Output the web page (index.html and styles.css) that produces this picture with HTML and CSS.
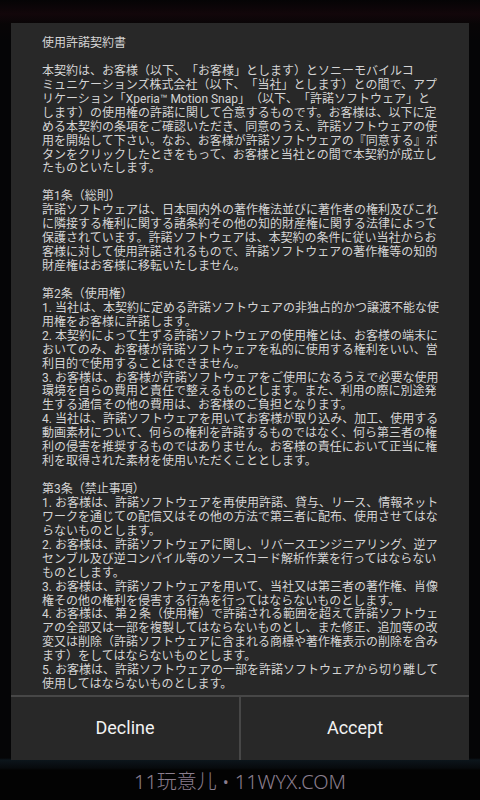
FILE: index.html
```html
<!DOCTYPE html>
<html lang="ja">
<head>
  <meta charset="UTF-8">
  <meta name="viewport" content="width=device-width, initial-scale=1">
  <link rel="stylesheet" href="styles.css">
  <title>使用許諾契約書</title>
</head>
<body>
  <div class="screen">
    <div class="dialog">
      <div class="terms">
        <p>使用許諾契約書</p>
        <p>本契約は、お客様（以下、「お客様」とします）とソニーモバイルコ<br>ミュニケーションズ株式会社（以下、「当社」とします）との間で、アプ<br>リケーション「Xperia™ Motion Snap」（以下、「許諾ソフトウェア」と<br>します）の使用権の許諾に関して合意するものです。お客様は、以下に定<br>める本契約の条項をご確認いただき、同意のうえ、許諾ソフトウェアの使<br>用を開始して下さい。なお、お客様が許諾ソフトウェアの『同意する』ボ<br>タンをクリックしたときをもって、お客様と当社との間で本契約が成立し<br>たものといたします。</p>
        <p>第1条（総則）<br>許諾ソフトウェアは、日本国内外の著作権法並びに著作者の権利及びこれ<br>に隣接する権利に関する諸条約その他の知的財産権に関する法律によって<br>保護されています。許諾ソフトウェアは、本契約の条件に従い当社からお<br>客様に対して使用許諾されるもので、許諾ソフトウェアの著作権等の知的<br>財産権はお客様に移転いたしません。</p>
        <p>第2条（使用権）<br>1. 当社は、本契約に定める許諾ソフトウェアの非独占的かつ譲渡不能な使<br>用権をお客様に許諾します。<br>2. 本契約によって生ずる許諾ソフトウェアの使用権とは、お客様の端末に<br>おいてのみ、お客様が許諾ソフトウェアを私的に使用する権利をいい、営<br>利目的で使用することはできません。<br>3. お客様は、お客様が許諾ソフトウェアをご使用になるうえで必要な使用<br>環境を自らの費用と責任で整えるものとします。また、利用の際に別途発<br>生する通信その他の費用は、お客様のご負担となります。<br>4. 当社は、許諾ソフトウェアを用いてお客様が取り込み、加工、使用する<br>動画素材について、何らの権利を許諾するものではなく、何ら第三者の権<br>利の侵害を推奨するものではありません。お客様の責任において正当に権<br>利を取得された素材を使用いただくこととします。</p>
        <p>第3条（禁止事項）<br>1. お客様は、許諾ソフトウェアを再使用許諾、貸与、リース、情報ネット<br>ワークを通じての配信又はその他の方法で第三者に配布、使用させてはな<br>らないものとします。<br>2. お客様は、許諾ソフトウェアに関し、リバースエンジニアリング、逆ア<br>センブル及び逆コンパイル等のソースコード解析作業を行ってはならない<br>ものとします。<br>3. お客様は、許諾ソフトウェアを用いて、当社又は第三者の著作権、肖像<br>権その他の権利を侵害する行為を行ってはならないものとします。<br>4. お客様は、第２条（使用権）で許諾される範囲を超えて許諾ソフトウェ<br>アの全部又は一部を複製してはならないものとし、また修正、追加等の改<br>変又は削除（許諾ソフトウェアに含まれる商標や著作権表示の削除を含み<br>ます）をしてはならないものとします。<br>5. お客様は、許諾ソフトウェアの一部を許諾ソフトウェアから切り離して<br>使用してはならないものとします。</p>
      </div>
      <div class="buttons">
        <div class="btn">Decline</div>
        <div class="btn">Accept</div>
      </div>
    </div>
    <div class="watermark">11玩意儿 • 11WYX.COM</div>
  </div>
</body>
</html>
```

FILE: styles.css
```css
body {
  margin: 0;
  background-color: #050506;
  font-family: Roboto, "Noto Sans CJK JP", sans-serif;
}

.screen {
  width: 480px;
  height: 800px;
  display: flex;
  flex-direction: column;
  background:
    linear-gradient(180deg, #050405 0px, #12060a 14px, #080506 24px, transparent 40px),
    linear-gradient(180deg, transparent 758px, #0c151b 760px, #070a0d 768px, #030303 770px),
    #050506;
  overflow: hidden;
}

.dialog {
  margin: 23px 11px 0;
  height: 737px;
  background-color: #282828;
  display: flex;
  flex-direction: column;
}

.terms {
  flex: 1;
  overflow: hidden;
  padding: 14px 31px 0;
  margin-bottom: 6px;
  color: #d4d4d4;
  font-size: 12px;
  line-height: 13.94px;
  text-spacing-trim: space-all;
}

.terms p {
  margin: 0 0 13.94px;
  white-space: nowrap;
}

.buttons {
  height: 63px;
  display: flex;
  border-top: 2px solid #474747;
}

.btn {
  flex: 1;
  display: flex;
  align-items: center;
  justify-content: center;
  color: #f2f2f2;
  font-size: 18px;
  padding-bottom: 2px;
}

.btn + .btn {
  border-left: 2px solid #474747;
}

.watermark {
  text-align: center;
  color: #8a7e8e;
  font-size: 20px;
  margin-top: 6px;
  font-family: "Noto Sans", "Noto Sans CJK SC", sans-serif;
  font-weight: 300;
}
```
